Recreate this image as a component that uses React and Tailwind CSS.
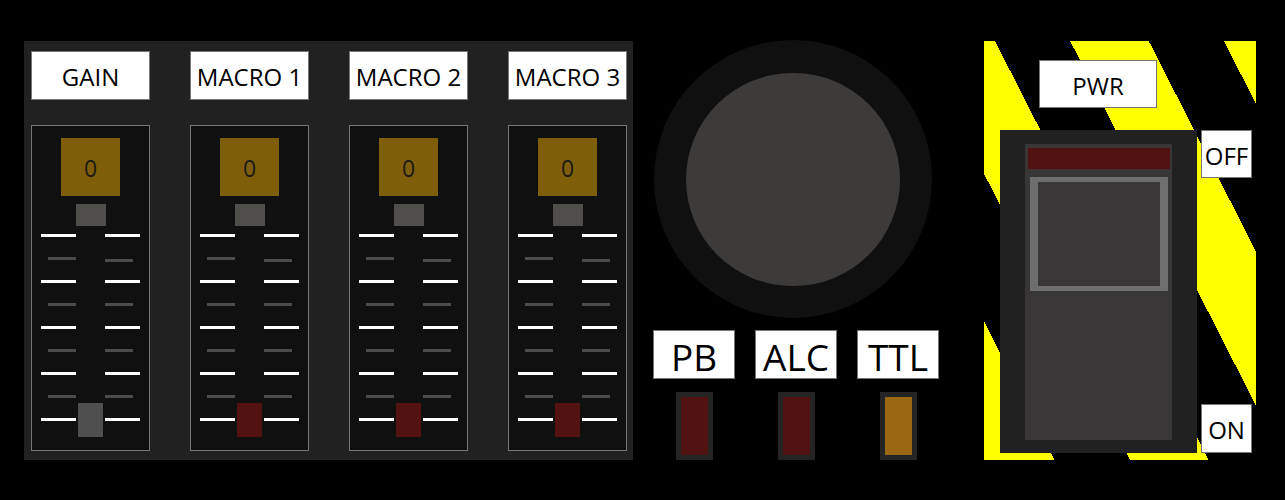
const channels = [
  { name: "GAIN", value: 0, thumb: "bg-[#4f4f4f]" },
  { name: "MACRO 1", value: 0, thumb: "bg-[#521212]" },
  { name: "MACRO 2", value: 0, thumb: "bg-[#521212]" },
  { name: "MACRO 3", value: 0, thumb: "bg-[#521212]" },
];

const toggles = [
  { name: "PB", lit: false },
  { name: "ALC", lit: false },
  { name: "TTL", lit: true },
];

function Label({ children, className = "" }) {
  return (
    <div
      className={`bg-white border border-[#767676] text-black flex items-center justify-center leading-none pt-[3px] ${className}`}
    >
      {children}
    </div>
  );
}

function TickColumn({ side }) {
  // white long ticks with grey short ones between, 23px apart
  const rows = [];
  for (let i = 0; i < 9; i++) {
    const major = i % 2 === 0;
    let mt = i === 0 ? "" : "mt-[20px]";
    if (side === "right" && i === 1) mt = "mt-[22px]";
    if (side === "right" && i === 2) mt = "mt-[18px]";
    rows.push(
      <div
        key={i}
        className={`h-[3px] ${mt} ${
          major ? "w-[35px] bg-white" : "w-[28px] bg-[#4d4a4a]"
        } ${!major && side === "left" ? "self-end" : ""}`}
      />
    );
  }
  return <div className="flex flex-col w-[35px]">{rows}</div>;
}

function Fader({ ch }) {
  return (
    <div className="flex flex-col w-[119px]">
      <Label className="h-[49px] text-[24px]">{ch.name}</Label>
      <div className="mt-[25px] h-[326px] bg-[#101010] border border-[#757575] flex flex-col items-center">
        <div className="mt-[12px] w-[59px] h-[58px] bg-[#7f5e0a] flex items-center justify-center text-[23px] text-[#1c1a14] leading-none pt-[2px]">
          {ch.value}
        </div>
        <div className="mt-[8px] w-[30px] h-[22px] bg-[#4f4e4b]" />
        <div className="mt-[8px] flex flex-row">
          <TickColumn side="left" />
          <div className="w-[29px] flex flex-col items-center pt-[169px]">
            <div className={`w-[25px] h-[34px] ${ch.thumb}`} />
          </div>
          <TickColumn side="right" />
        </div>
      </div>
    </div>
  );
}

export default function App() {
  return (
    <div
      className="w-[1285px] h-[500px] bg-black flex flex-row items-start overflow-hidden"
      style={{ fontFamily: '"Open Sans", "Noto Sans", sans-serif' }}
    >
      {/* fader bank */}
      <div className="ml-[24px] mt-[41px] w-[609px] h-[419px] bg-[#212121] flex flex-row gap-[40px] pl-[7px] pt-[10px]">
        {channels.map((ch) => (
          <Fader key={ch.name} ch={ch} />
        ))}
      </div>

      {/* knob + toggles */}
      <div className="ml-[20px] w-[286px] flex flex-col">
        <div className="mt-[40px] ml-[1px] w-[278px] h-[278px] rounded-full bg-[#101010] flex items-center justify-center">
          <div className="w-[214px] h-[213px] rounded-full bg-[#3c3b3a]" />
        </div>
        <div className="mt-[12px] flex flex-row gap-[20px]">
          {toggles.map((t) => (
            <div key={t.name} className="w-[82px] flex flex-col items-center">
              <Label className="w-[82px] h-[49px] text-[37px]">{t.name}</Label>
              <div className="mt-[13px] w-[37px] h-[68px] bg-[#242424] px-[5px] py-[5px]">
                <div
                  className={`w-full h-full ${
                    t.lit ? "bg-[#9c6713]" : "bg-[#521212]"
                  }`}
                />
              </div>
            </div>
          ))}
        </div>
      </div>

      {/* power switch on hazard stripes */}
      <div className="ml-[45px] mt-[41px] w-[272px] h-[419px] bg-[image:repeating-linear-gradient(63deg,#ffff00_0_63px,#000_63px_130px,#ffff00_130px_137px)] flex flex-col">
        <Label className="ml-[55px] mt-[19px] w-[118px] h-[48px] text-[24px]">
          PWR
        </Label>
        <div className="mt-[22px] ml-[16px] flex flex-row">
          <div className="w-[197px] h-[323px] bg-[#212121] pl-[25px] pt-[14px]">
            <div className="w-[147px] h-[296px] bg-[#383637] pt-[4px]">
              <div className="ml-[3px] w-[142px] h-[21px] bg-[#521212]" />
              <div className="ml-[5px] w-[138px] h-[114px] border-x-8 border-b-[5px] border-[#6e6e6e]">
                <div className="mt-[8px] h-[5px] bg-[#6e6e6e]" />
              </div>
            </div>
          </div>
          <div className="ml-[4px] h-[323px] flex flex-col justify-between">
            <Label className="w-[51px] h-[48px] text-[24px]">OFF</Label>
            <Label className="w-[51px] h-[49px] text-[24px]">ON</Label>
          </div>
        </div>
      </div>
    </div>
  );
}
